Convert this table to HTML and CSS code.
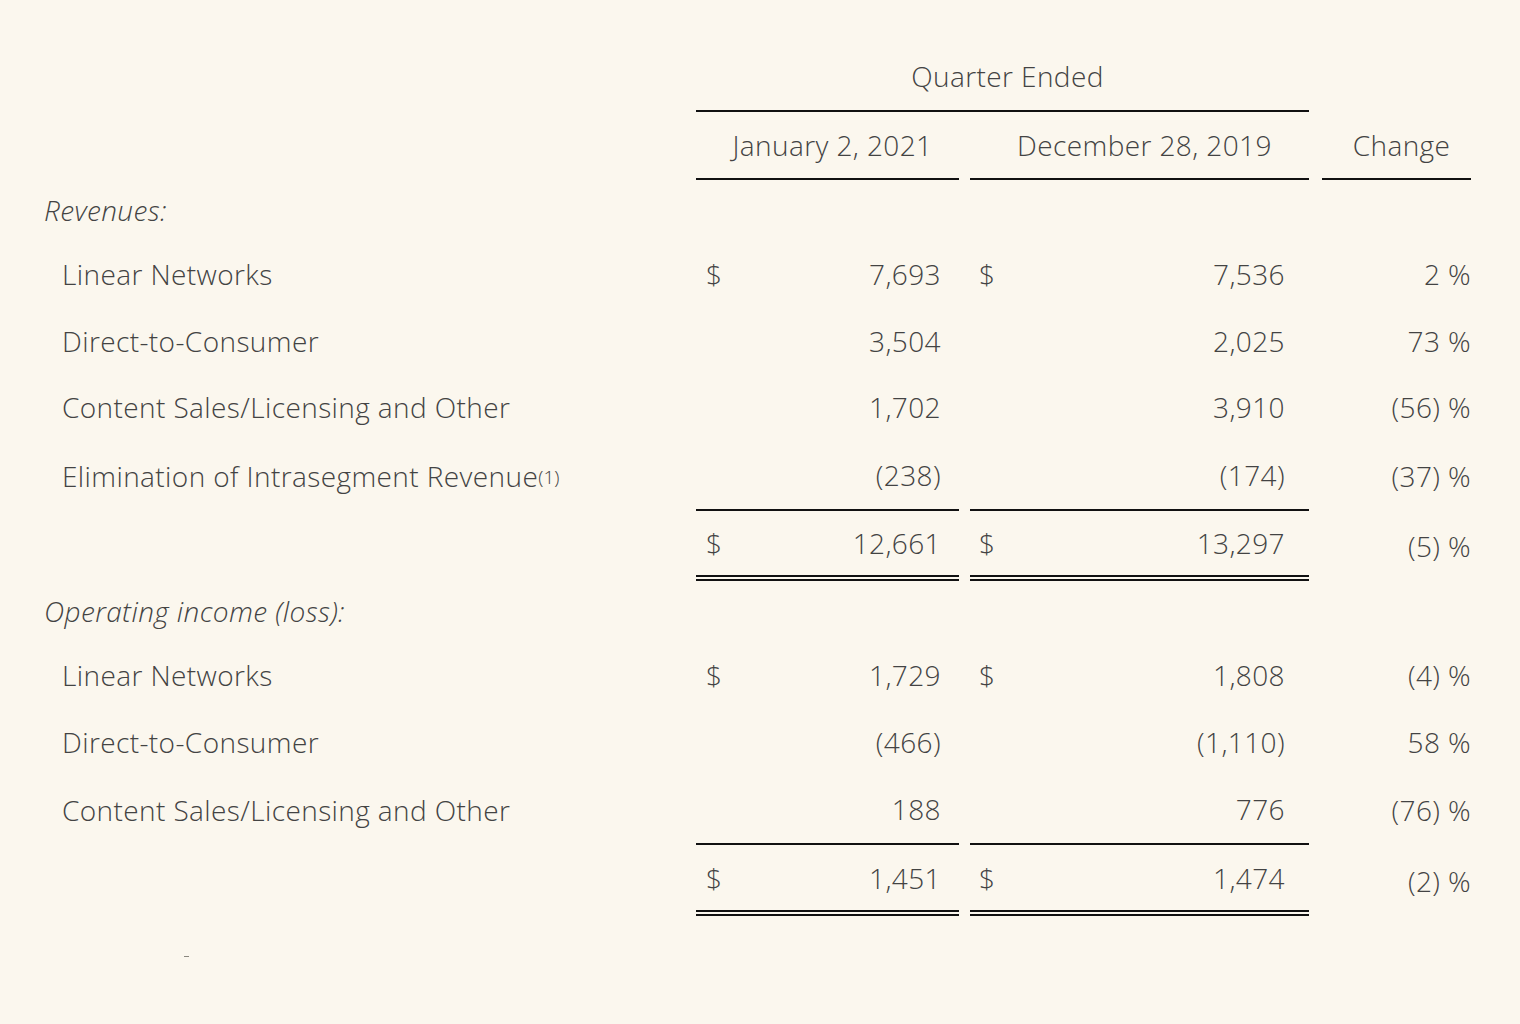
FILE: index.html
```html
<!DOCTYPE html>
<html>
<head>
<meta charset="utf-8">
<link rel="stylesheet" href="styles.css">
</head>
<body>
<div class="page">
  <div class="tbl">
    <div class="row r-qe">
      <div class="cell lab"></div>
      <div class="cell qe line">Quarter Ended</div>
      <div class="cell sp"></div>
      <div class="cell"></div>
    </div>
    <div class="row r-head">
      <div class="cell lab"></div>
      <div class="cell head line">January 2, 2021</div>
      <div class="cell sp"></div>
      <div class="cell head line">December 28, 2019</div>
      <div class="cell sp"></div>
      <div class="cell head line">Change</div>
    </div>

    <div class="row r-sec">
      <div class="cell lab sec">Revenues:</div>
    </div>
    <div class="row r-data">
      <div class="cell lab ind">Linear Networks</div>
      <div class="cell m1"><span>$</span><span>7,693</span></div>
      <div class="cell sp"></div>
      <div class="cell m2"><span>$</span><span>7,536</span></div>
      <div class="cell sp"></div>
      <div class="cell chg">2 %</div>
    </div>
    <div class="row r-data">
      <div class="cell lab ind">Direct-to-Consumer</div>
      <div class="cell m1"><span></span><span>3,504</span></div>
      <div class="cell sp"></div>
      <div class="cell m2"><span></span><span>2,025</span></div>
      <div class="cell sp"></div>
      <div class="cell chg">73 %</div>
    </div>
    <div class="row r-data">
      <div class="cell lab ind">Content Sales/Licensing and Other</div>
      <div class="cell m1"><span></span><span>1,702</span></div>
      <div class="cell sp"></div>
      <div class="cell m2"><span></span><span>3,910</span></div>
      <div class="cell sp"></div>
      <div class="cell chg">(56) %</div>
    </div>
    <div class="row r-last1">
      <div class="cell lab ind">Elimination of Intrasegment Revenue<span class="fn">(1)</span></div>
      <div class="cell m1 line"><span></span><span>(238)</span></div>
      <div class="cell sp"></div>
      <div class="cell m2 line"><span></span><span>(174)</span></div>
      <div class="cell sp"></div>
      <div class="cell chg">(37) %</div>
    </div>
    <div class="row r-tot1">
      <div class="cell lab"></div>
      <div class="cell m1 dbl"><span>$</span><span>12,661</span></div>
      <div class="cell sp"></div>
      <div class="cell m2 dbl"><span>$</span><span>13,297</span></div>
      <div class="cell sp"></div>
      <div class="cell chg">(5) %</div>
    </div>

    <div class="row r-sec">
      <div class="cell lab sec">Operating income (loss):</div>
    </div>
    <div class="row r-data">
      <div class="cell lab ind">Linear Networks</div>
      <div class="cell m1"><span>$</span><span>1,729</span></div>
      <div class="cell sp"></div>
      <div class="cell m2"><span>$</span><span>1,808</span></div>
      <div class="cell sp"></div>
      <div class="cell chg">(4) %</div>
    </div>
    <div class="row r-data">
      <div class="cell lab ind">Direct-to-Consumer</div>
      <div class="cell m1"><span></span><span>(466)</span></div>
      <div class="cell sp"></div>
      <div class="cell m2"><span></span><span>(1,110)</span></div>
      <div class="cell sp"></div>
      <div class="cell chg">58 %</div>
    </div>
    <div class="row r-last2">
      <div class="cell lab ind">Content Sales/Licensing and Other</div>
      <div class="cell m1 line"><span></span><span>188</span></div>
      <div class="cell sp"></div>
      <div class="cell m2 line"><span></span><span>776</span></div>
      <div class="cell sp"></div>
      <div class="cell chg">(76) %</div>
    </div>
    <div class="row r-tot2">
      <div class="cell lab"></div>
      <div class="cell m1 dbl"><span>$</span><span>1,451</span></div>
      <div class="cell sp"></div>
      <div class="cell m2 dbl"><span>$</span><span>1,474</span></div>
      <div class="cell sp"></div>
      <div class="cell chg">(2) %</div>
    </div>
  </div>
  <div class="footdash"></div>
</div>
</body>
</html>
```

FILE: styles.css
```css
html, body {
  margin: 0;
  padding: 0;
  background: #fbf7ee;
}

body {
  width: 1520px;
  height: 1024px;
  overflow: hidden;
  font-family: "Open Sans", "Lato", sans-serif;
  font-size: 28px;
  font-weight: 360;
  letter-spacing: 0.4px;
  color: #434343;
}

.page {
  padding: 42px 0 0 44px;
}

.tbl {
  display: flex;
  flex-direction: column;
}

.row {
  display: grid;
  grid-template-columns: 652px 263px 11px 339px 13px 149px;
}

.r-qe { height: 70px; }
.r-head { height: 68px; }
.r-sec { height: 60px; }
.r-data { height: 66px; }
.r-last1 { height: 71px; }
.r-tot1 { height: 70px; }
.r-last2 { height: 70px; }
.r-tot2 { height: 71px; }

.r-sec + .r-data { height: 68px; }

.cell {
  display: flex;
  align-items: center;
  box-sizing: border-box;
  white-space: nowrap;
}

.qe {
  grid-column: 2 / span 3;
  justify-content: center;
  padding-left: 10px;
}

.head {
  justify-content: center;
  padding-left: 10px;
}

.line {
  border-bottom: 2px solid #111;
}

.dbl {
  border-bottom: 6px double #111;
}

.sec {
  font-style: italic;
}

.ind {
  padding-left: 18px;
}

.fn {
  font-size: 19px;
  letter-spacing: 0;
  position: relative;
  top: 1px;
}

.m1, .m2 {
  justify-content: space-between;
}

.m1 {
  padding-left: 10px;
  padding-right: 18px;
}

.m2 {
  padding-left: 9px;
  padding-right: 24px;
}

.chg {
  justify-content: flex-end;
}

.footdash {
  width: 5px;
  height: 1px;
  background: #8a877f;
  margin: 40px 0 0 140px;
}
```
